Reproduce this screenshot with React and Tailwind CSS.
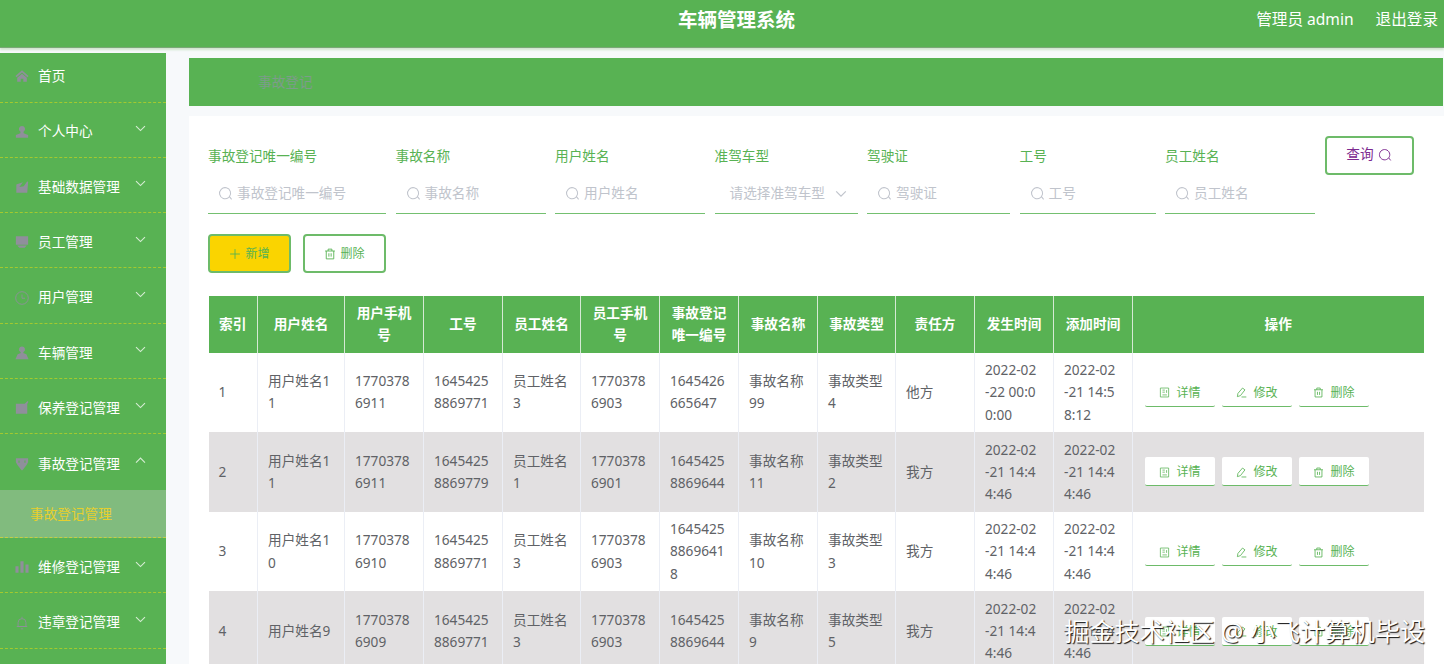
import React, { useState } from 'react';

const MENU = [
  { icon: 'home', label: '首页' },
  { icon: 'user', label: '个人中心', children: ['个人信息'] },
  { icon: 'data', label: '基础数据管理', children: ['基础数据'] },
  { icon: 'platform', label: '员工管理', children: ['员工管理'] },
  { icon: 'clock', label: '用户管理', children: ['用户管理'] },
  { icon: 'custom', label: '车辆管理', children: ['车辆管理'] },
  { icon: 'release', label: '保养登记管理', children: ['保养登记管理'] },
  { icon: 'trophy', label: '事故登记管理', children: ['事故登记管理'] },
  { icon: 'bars', label: '维修登记管理', children: ['维修登记管理'] },
  { icon: 'bell', label: '违章登记管理', children: ['违章登记管理'] },
];

const FIELDS = [
  { label: '事故登记唯一编号', width: 'w-[178px]' },
  { label: '事故名称', width: 'w-[150px]' },
  { label: '用户姓名', width: 'w-[150px]' },
  { label: '准驾车型', width: 'w-[143px]', select: true },
  { label: '驾驶证', width: 'w-[143px]' },
  { label: '工号', width: 'w-[136px]' },
  { label: '员工姓名', width: 'w-[150px]' },
];

const COLUMNS = [
  { title: '索引', width: 'w-[49px]' },
  { title: '用户姓名', width: 'w-[87px]' },
  { title: '用户手机\n号', width: 'w-[79px]' },
  { title: '工号', width: 'w-[79px]' },
  { title: '员工姓名', width: 'w-[78px]' },
  { title: '员工手机\n号', width: 'w-[79px]' },
  { title: '事故登记\n唯一编号', width: 'w-[79px]' },
  { title: '事故名称', width: 'w-[79px]' },
  { title: '事故类型', width: 'w-[78px]' },
  { title: '责任方', width: 'w-[79px]' },
  { title: '发生时间', width: 'w-[79px]' },
  { title: '添加时间', width: 'w-[79px]' },
];

const ROWS = [
  ['1', '用户姓名1\n1', '1770378\n6911', '1645425\n8869771', '员工姓名\n3', '1770378\n6903', '1645426\n665647', '事故名称\n99', '事故类型\n4', '他方', '2022-02\n-22 00:0\n0:00', '2022-02\n-21 14:5\n8:12'],
  ['2', '用户姓名1\n1', '1770378\n6911', '1645425\n8869779', '员工姓名\n1', '1770378\n6901', '1645425\n8869644', '事故名称\n11', '事故类型\n2', '我方', '2022-02\n-21 14:4\n4:46', '2022-02\n-21 14:4\n4:46'],
  ['3', '用户姓名1\n0', '1770378\n6910', '1645425\n8869771', '员工姓名\n3', '1770378\n6903', '1645425\n8869641\n8', '事故名称\n10', '事故类型\n3', '我方', '2022-02\n-21 14:4\n4:46', '2022-02\n-21 14:4\n4:46'],
  ['4', '用户姓名9', '1770378\n6909', '1645425\n8869771', '员工姓名\n3', '1770378\n6903', '1645425\n8869644', '事故名称\n9', '事故类型\n5', '我方', '2022-02\n-21 14:4\n4:46', '2022-02\n-21 14:4\n4:46'],
];

const ICONS = {
  home: <path d="M8 1.5.5 8l1.300 1.300L8 4l6.200 5.300L15.500 8zM2.500 10v4.500h4V11h3v3.500h4V10L8 5.500z" fill="currentColor" />,
  user: <path d="M8 1a3.600 3.600 0 0 1 1.800 6.700V9.300l5.200 2V14.500H1v-3.200l5.200-2V7.700A3.600 3.600 0 0 1 8 1z" fill="currentColor" />,
  data: <path d="M1.500 5 9 2.500 5 8l5-1 4-5.500 1 1-1 12H1.500z" fill="currentColor" />,
  platform: <path d="M1 1.500h14v9.500H1zM2.500 12h11l-2.500 2.500H5z" fill="currentColor" />,
  clock: (
    <g fill="none" stroke="currentColor">
      <circle cx="8" cy="8" r="7.200" />
      <path d="M8 4v4.300h3.500" />
    </g>
  ),
  custom: <path d="M8 .5a3.400 3.400 0 0 1 2 6.200L9.300 8l3.700 1.500 2.500 5.500H.5L3 9.500 6.700 8 6 6.700A3.400 3.400 0 0 1 8 .5z" fill="currentColor" />,
  release: <path d="M1 3h10l3.500-3 .8.800L14 3.500v11H1z" fill="currentColor" />,
  trophy: <path d="M1 1.500h14V6l-2 3.500L8.500 15h-1L3 9.500 1 6zM4 4v2.500h1.200V4zm6.800 0v2.500H12V4z" fill="currentColor" />,
  bars: <path d="M.5 7H4v7.500H.5zM6.200 1.500h3.600v13H6.200zM12 5h3.500v9.500H12z" fill="currentColor" />,
  bell: <path d="M8 .8V3M3.500 12V7.500a4.500 4.500 0 0 1 9 0V12zM6.500 14.700h3M2 12h12" fill="none" stroke="currentColor" />,
  search: <path d="M11.200 12.300a5.900 5.900 0 1 1 1-1l2.300 2.900M11.200 12.300l1-1" fill="none" stroke="currentColor" strokeWidth="1.100" />,
  plus: <path d="M8 1.500v13M1.500 8h13" fill="none" stroke="currentColor" strokeWidth="1.200" />,
  trash: <path d="M1.500 4h13M5.500 4V1.500h5V4M3 4v10.500h10V4M6.500 7v4.500M9.500 7v4.500" fill="none" stroke="currentColor" strokeWidth="1.200" />,
  detail: <path d="M2 1.500h12v13H2zM5 4.500h3.500M5 7.500h3.500M5 11.500h6.500M11 4.500v4" fill="none" stroke="currentColor" strokeWidth="1.100" />,
  edit: <path d="M9.500 1.500 13 4.200 6.500 12.500l-4.500 1.500.8-4.700zM8 14.500h7" fill="none" stroke="currentColor" strokeWidth="1.200" />,
  down: <path d="m2.500 5 5.500 5.500L13.500 5" fill="none" stroke="currentColor" strokeWidth="1.400" />,
  up: <path d="M2.500 10.500 8 5l5.500 5.500" fill="none" stroke="currentColor" strokeWidth="1.400" />,
};

function Icon({ name, className }) {
  return (
    <svg viewBox="0 0 16 16" className={`shrink-0 ${className}`}>
      {ICONS[name]}
    </svg>
  );
}

function Sidebar({ opened, onToggle }) {
  return (
    <aside className="w-[166px] shrink-0 bg-[#58b253] text-white">
      {MENU.map((item, i) => (
        <div key={item.label}>
          <div
            onClick={() => onToggle(item.label)}
            className={`flex items-center pl-[15px] pr-[19px] cursor-pointer ${i === 0 ? 'h-[49.5px] pb-0.5' : 'h-[55.3px] pt-1'} ${
              opened === item.label ? '' : 'border-b border-dashed border-[#a3c92f]'
            }`}
          >
            <Icon name={item.icon} className="size-[14px] text-[#8f8f9b]" />
            <span className="ml-[9px] flex-1">{item.label}</span>
            {item.children && (
              <Icon name={opened === item.label ? 'up' : 'down'} className="size-[13px] -mt-1.5 text-[#d5ecd3]" />
            )}
          </div>
          {opened === item.label && item.children?.map((child) => (
            <div key={child} className="h-[48.5px] pl-[30px] pt-px flex items-center bg-[#81bb7e] text-[#e6cf2e] border-b border-dashed border-[#c3cf45]">
              {child}
            </div>
          ))}
        </div>
      ))}
    </aside>
  );
}

function SearchField({ field }) {
  return (
    <div className={`${field.width} shrink-0`}>
      <div className="h-[22px] leading-[22px] text-[#58b253]">{field.label}</div>
      <div className="mt-[9px] h-[38px] pb-0.5 flex items-center border-b border-b-[#74c070] text-[#c0c4cc]">
        {field.select ? (
          <>
            <span className="pl-[15px] flex-1">请选择准驾车型</span>
            <Icon name="down" className="mr-[10px] size-[14px]" />
          </>
        ) : (
          <>
            <Icon name="search" className="ml-[10px] mr-[4px] size-[15px]" />
            <span>{field.label}</span>
          </>
        )}
      </div>
    </div>
  );
}

function ActionButton({ icon, children }) {
  return (
    <button className="w-[70px] h-[29px] pt-0.5 flex items-center justify-center gap-[6px] rounded-xs bg-white border-b border-b-[#6dbb69] text-xs text-[#58b253]">
      <Icon name={icon} className="size-[11px]" />
      {children}
    </button>
  );
}

export default function App() {
  const [opened, setOpened] = useState('事故登记管理');

  return (
    <div className="relative h-screen overflow-hidden flex flex-col bg-[#f7f9fb] text-[13.65px] font-['Noto_Sans','Noto_Sans_CJK_SC',sans-serif]">
      <header className="h-12 shrink-0 grid grid-cols-3 items-center bg-[#58b253] border-b border-b-[#7aa877] pb-[7px] text-white shadow-[0_2px_2px_#cfe5ce]">
        <h1 className="col-start-2 text-center text-[19.5px] font-bold ml-[29px]">车辆管理系统</h1>
        <div className="flex justify-end gap-[22px] pr-[6px] text-[15.6px]">
          <span>管理员 admin</span>
          <span>退出登录</span>
        </div>
      </header>

      <div className="flex flex-1 min-h-0 pt-[5px]">
        <Sidebar opened={opened} onToggle={(label) => setOpened(opened === label ? '' : label)} />

        <main className="flex-1 min-w-0 pl-[23px] pt-[5px]">
          <div className="h-12 mr-px pl-[69px] flex items-center bg-[#58b253] text-[#7d9c8b]">事故登记</div>

          <div className="mt-[10px] h-[560px] bg-white pl-[19px] pt-[20px]">
            <div className="flex gap-[9.5px]">
              <div className="flex gap-[9.5px] pt-[9px]">
                {FIELDS.map((f) => <SearchField key={f.label} field={f} />)}
              </div>
              <button className="w-[89px] h-[39px] pb-0.5 flex items-center justify-center gap-1 rounded border-2 border-[#6dbb69] bg-white text-[#7d2a90]">
                查询
                <Icon name="search" className="size-[14px]" />
              </button>
            </div>

            <div className="mt-5 flex gap-3 text-xs text-[#58b253]">
              <button className="w-[83px] h-[39px] pt-px flex items-center justify-center gap-1 rounded border-2 border-[#6dbb69] bg-[#fad400]">
                <Icon name="plus" className="size-[12px]" />
                新增
              </button>
              <button className="w-[83px] h-[39px] pt-px flex items-center justify-center gap-1 rounded border-2 border-[#6dbb69] bg-white">
                <Icon name="trash" className="size-[12px]" />
                删除
              </button>
            </div>

            <table className="mt-[22.6px] ml-[0.5px] w-[1215px] table-fixed border-collapse leading-[22.3px] text-[#606266]">
              <thead>
                <tr className="h-[57px] bg-[#58b253] text-white">
                  {COLUMNS.map((c) => (
                    <th key={c.title} className={`${c.width} p-0 border-r border-r-[#d5e9d4] whitespace-pre font-bold`}>{c.title}</th>
                  ))}
                  <th className="p-0 font-bold">操作</th>
                </tr>
              </thead>
              <tbody>
                {ROWS.map((row) => (
                  <tr key={row[0]} className="h-[79.6px] even:bg-[#e2e0e1]">
                    {row.map((cell, i) => (
                      <td key={i} className="p-0 pl-[10px] border-r border-r-[#ebeef5] whitespace-pre">{cell}</td>
                    ))}
                    <td className="p-0 pl-3">
                      <div className="flex gap-[7px]">
                        <ActionButton icon="detail">详情</ActionButton>
                        <ActionButton icon="edit">修改</ActionButton>
                        <ActionButton icon="trash">删除</ActionButton>
                      </div>
                    </td>
                  </tr>
                ))}
              </tbody>
            </table>
          </div>
        </main>
      </div>

      <div className="absolute right-[19px] bottom-[15px] leading-9 text-[25px] text-white whitespace-nowrap [text-shadow:1px_1px_1px_#111]">
        掘金技术社区 @ 小飞计算机毕设
      </div>
    </div>
  );
}
